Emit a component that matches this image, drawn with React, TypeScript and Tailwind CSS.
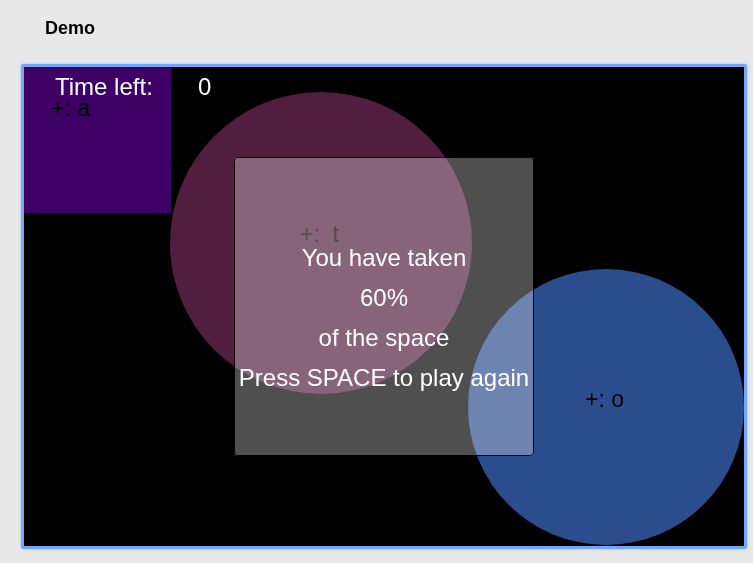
import React from "react";

const MESSAGE = ["You have taken", "60%", "of the space", "Press SPACE to play again"];

export default function App() {
  return (
    <div className="min-h-[563px] w-full bg-[#e8e8e8] font-['Liberation_Sans',Arial,Helvetica,sans-serif]">
      <div className="pl-[45px] pt-[18px] text-[18px] font-bold leading-[20px] text-black">Demo</div>

      <div className="ml-[21px] mt-[26px] w-[726px] rounded-[2px] border-[3px] border-[#74a6f6] shadow-[0_0_3px_#9cc0f7]">
        <GameCanvas />
      </div>
    </div>
  );
}

function GameCanvas() {
  return (
    <svg width="720" height="479" viewBox="0 0 720 479" className="block bg-black">
      <rect x="0" y="0" width="720" height="479" fill="#000" />

      {/* players */}
      <rect x="0" y="0" width="147" height="146" fill="#3d0064" />
      <circle cx="297" cy="176" r="151" fill="#521e40" />
      <circle cx="582" cy="340" r="138" fill="#2b4d8d" />

      <text x="27" y="49" fontSize="23" fill="#000">+: a</text>
      <text x="276" y="175" fontSize="23" fill="#000" className="whitespace-pre">+:  t</text>
      <text x="561" y="340" fontSize="23" fill="#000">+: o</text>

      {/* game over panel */}
      <rect x="210" y="90" width="300" height="299" rx="3" fill="#4f4f4f" className="mix-blend-screen" />
      <rect x="210.5" y="90.5" width="299" height="298" rx="3" fill="none" stroke="#000" strokeWidth="1" />

      {MESSAGE.map((line, i) => (
        <text key={line} x="360" y={199 + i * 40} fontSize="24" fill="#fff" textAnchor="middle">
          {line}
        </text>
      ))}

      <text x="31" y="28" fontSize="24" fill="#fff">Time left:</text>
      <text x="174" y="28" fontSize="24" fill="#fff">0</text>
    </svg>
  );
}
